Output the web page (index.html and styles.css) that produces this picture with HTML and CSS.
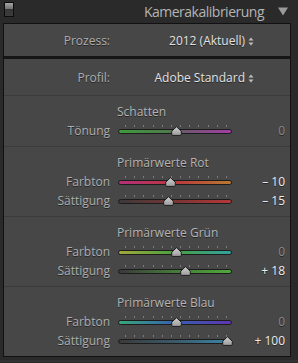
FILE: index.html
```html
<!DOCTYPE html>
<html lang="de">
<head>
<meta charset="utf-8">
<title>Kamerakalibrierung</title>
<link rel="stylesheet" href="styles.css">
</head>
<body>
<div class="header">
  <div class="toggle"></div>
  <div class="title">Kamerakalibrierung</div>
  <svg class="caret" width="10" height="9" viewBox="0 0 10 9"><path d="M0 0.5 H10 L5 8.5 Z" fill="#9a9a9a"/></svg>
</div>
<div class="panel">
  <div class="sec-proc">
    <div class="sel-row">
      <span class="label">Prozess:</span>
      <span class="sel">2012 (Aktuell)<svg class="spin" width="6" height="9" viewBox="0 0 6 9"><path d="M3 0.5 L5.5 3.5 H0.5 Z M3 8.5 L5.5 5.5 H0.5 Z" fill="#bdbdbd"/></svg></span>
    </div>
  </div>
  <div class="sec-profil">
    <div class="sel-row">
      <span class="label">Profil:</span>
      <span class="sel">Adobe Standard<svg class="spin" width="6" height="9" viewBox="0 0 6 9"><path d="M3 0.5 L5.5 3.5 H0.5 Z M3 8.5 L5.5 5.5 H0.5 Z" fill="#bdbdbd"/></svg></span>
    </div>
  </div>

  <div class="sec">
    <div class="sec-title">Schatten</div>
    <div class="row">
      <span class="label">Tönung</span>
      <div class="slider"><div class="ticks"><i></i><i></i><i></i><i></i><i></i><i></i><i></i><i></i><i></i><i></i><i></i><i></i></div><div class="track t-toenung"></div><svg class="thumb" style="left:52.5px" width="11" height="10" viewBox="0 0 11 10"><path d="M5.5 0.7 L10.3 5.2 V8.3 Q10.3 9.4 9.2 9.4 H1.8 Q0.7 9.4 0.7 8.3 V5.2 Z" fill="url(#tg)" stroke="#1e1e1e" stroke-width="1"/></svg></div>
      <span class="val zero">0</span>
    </div>
  </div>

  <div class="sec">
    <div class="sec-title">Primärwerte Rot</div>
    <div class="row">
      <span class="label">Farbton</span>
      <div class="slider"><div class="ticks"><i></i><i></i><i></i><i></i><i></i><i></i><i></i><i></i><i></i><i></i><i></i><i></i></div><div class="track t-rot-h"></div><svg class="thumb" style="left:47.3px" width="11" height="10" viewBox="0 0 11 10"><path d="M5.5 0.7 L10.3 5.2 V8.3 Q10.3 9.4 9.2 9.4 H1.8 Q0.7 9.4 0.7 8.3 V5.2 Z" fill="url(#tg)" stroke="#1e1e1e" stroke-width="1"/></svg></div>
      <span class="val">– 10</span>
    </div>
    <div class="row">
      <span class="label">Sättigung</span>
      <div class="slider"><div class="ticks"><i></i><i></i><i></i><i></i><i></i><i></i><i></i><i></i><i></i><i></i><i></i><i></i></div><div class="track t-rot-s"></div><svg class="thumb" style="left:44.7px" width="11" height="10" viewBox="0 0 11 10"><path d="M5.5 0.7 L10.3 5.2 V8.3 Q10.3 9.4 9.2 9.4 H1.8 Q0.7 9.4 0.7 8.3 V5.2 Z" fill="url(#tg)" stroke="#1e1e1e" stroke-width="1"/></svg></div>
      <span class="val">– 15</span>
    </div>
  </div>

  <div class="sec">
    <div class="sec-title">Primärwerte Grün</div>
    <div class="row">
      <span class="label">Farbton</span>
      <div class="slider"><div class="ticks"><i></i><i></i><i></i><i></i><i></i><i></i><i></i><i></i><i></i><i></i><i></i><i></i></div><div class="track t-gruen-h"></div><svg class="thumb" style="left:52.5px" width="11" height="10" viewBox="0 0 11 10"><path d="M5.5 0.7 L10.3 5.2 V8.3 Q10.3 9.4 9.2 9.4 H1.8 Q0.7 9.4 0.7 8.3 V5.2 Z" fill="url(#tg)" stroke="#1e1e1e" stroke-width="1"/></svg></div>
      <span class="val zero">0</span>
    </div>
    <div class="row">
      <span class="label">Sättigung</span>
      <div class="slider"><div class="ticks"><i></i><i></i><i></i><i></i><i></i><i></i><i></i><i></i><i></i><i></i><i></i><i></i></div><div class="track t-gruen-s"></div><svg class="thumb" style="left:61.8px" width="11" height="10" viewBox="0 0 11 10"><path d="M5.5 0.7 L10.3 5.2 V8.3 Q10.3 9.4 9.2 9.4 H1.8 Q0.7 9.4 0.7 8.3 V5.2 Z" fill="url(#tg)" stroke="#1e1e1e" stroke-width="1"/></svg></div>
      <span class="val">+ 18</span>
    </div>
  </div>

  <div class="sec last">
    <div class="sec-title">Primärwerte Blau</div>
    <div class="row">
      <span class="label">Farbton</span>
      <div class="slider"><div class="ticks"><i></i><i></i><i></i><i></i><i></i><i></i><i></i><i></i><i></i><i></i><i></i><i></i></div><div class="track t-blau-h"></div><svg class="thumb" style="left:52.5px" width="11" height="10" viewBox="0 0 11 10"><path d="M5.5 0.7 L10.3 5.2 V8.3 Q10.3 9.4 9.2 9.4 H1.8 Q0.7 9.4 0.7 8.3 V5.2 Z" fill="url(#tg)" stroke="#1e1e1e" stroke-width="1"/></svg></div>
      <span class="val zero">0</span>
    </div>
    <div class="row">
      <span class="label">Sättigung</span>
      <div class="slider"><div class="ticks"><i></i><i></i><i></i><i></i><i></i><i></i><i></i><i></i><i></i><i></i><i></i><i></i></div><div class="track t-blau-s"></div><svg class="thumb" style="left:104.2px" width="11" height="10" viewBox="0 0 11 10"><path d="M5.5 0.7 L10.3 5.2 V8.3 Q10.3 9.4 9.2 9.4 H1.8 Q0.7 9.4 0.7 8.3 V5.2 Z" fill="url(#tg)" stroke="#1e1e1e" stroke-width="1"/></svg></div>
      <span class="val">+ 100</span>
    </div>
  </div>
</div>
<div class="foot"></div>
<svg width="0" height="0" class="defs"><defs><linearGradient id="tg" x1="0" y1="0" x2="0" y2="1"><stop offset="0" stop-color="#d2d2d2"/><stop offset="1" stop-color="#9a9a9a"/></linearGradient></defs></svg>
</body>
</html>
```
FILE: styles.css
```css
html, body {
  margin: 0;
  padding: 0;
}
body {
  width: 298px;
  height: 363px;
  overflow: hidden;
  background: #2a2a2a;
  font-family: "Open Sans", "DejaVu Sans", sans-serif;
  font-size: 12px;
  color: #aaaaaa;
}
.defs {
  position: absolute;
}
.header {
  height: 23px;
  display: flex;
  align-items: center;
  padding: 0 10px 0 4px;
  box-sizing: border-box;
}
.toggle {
  align-self: flex-start;
  margin-top: 2px;
  width: 10px;
  height: 15px;
  box-sizing: border-box;
  border: 1px solid #0c0c0c;
  background: linear-gradient(#a4a4a4, #6c6c6c 50%, #363636 50%, #3c3c3c);
}
.title {
  margin-left: auto;
  margin-right: 14px;
  font-size: 14px;
  letter-spacing: -0.5px;
  color: #b4b4b4;
  line-height: 23px;
}
.caret {
  display: block;
}
.panel {
  margin-left: 3px;
  width: 288px;
  box-sizing: border-box;
  border: 1px solid #111111;
  background: #474747;
}
.sec-proc {
  height: 32px;
  display: flex;
  align-items: center;
  border-bottom: 3px solid #151515;
}
.sec-profil {
  height: 36px;
  display: flex;
  align-items: center;
  border-bottom: 1px solid #3b3b3b;
}
.sel-row {
  display: grid;
  grid-template-columns: 106px 136px;
  column-gap: 8px;
  align-items: center;
  width: 100%;
}
.label {
  text-align: right;
  color: #aeaeae;
  text-shadow: 0 1px 0 #262626;
  white-space: nowrap;
}
.sel {
  text-align: right;
  color: #e2e2e2;
  text-shadow: 0 1px 0 #262626;
  white-space: nowrap;
}
.spin {
  margin-left: 3px;
  vertical-align: -1px;
}
.sec {
  padding: 6px 0;
  border-bottom: 1px solid #3b3b3b;
}
.sec.last {
  border-bottom: none;
}
.sec-title {
  height: 19px;
  line-height: 19px;
  padding-left: 113px;
  color: #b4b4b4;
  text-shadow: 0 1px 0 #262626;
}
.row {
  display: grid;
  grid-template-columns: 106px 114px 45px;
  column-gap: 8px;
  height: 19px;
  line-height: 19px;
  align-items: center;
}
.slider {
  position: relative;
  height: 19px;
}
.ticks {
  position: absolute;
  left: 7px;
  right: 5px;
  top: 4px;
  height: 2px;
  display: flex;
  justify-content: space-between;
}
.ticks i {
  display: block;
  width: 1px;
  height: 2px;
  background: #7c7c7c;
}
.track {
  position: absolute;
  left: 0;
  right: 0;
  top: 8px;
  height: 5px;
  box-sizing: border-box;
  border: 1px solid #1c1c1c;
  border-radius: 3px;
}
.thumb {
  position: absolute;
  top: 5px;
  display: block;
}
.t-toenung { background: linear-gradient(90deg, #3f9a3c, #4f7a4c 45%, #6a5a6a 55%, #a23ca6); }
.t-rot-h { background: linear-gradient(90deg, #b3307a, #b8383e 50%, #b87a30); }
.t-rot-s { background: linear-gradient(90deg, #3a3a3a, #7a3434 50%, #b43838); }
.t-gruen-h { background: linear-gradient(90deg, #a2a83a, #48a040 50%, #32a0a0); }
.t-gruen-s { background: linear-gradient(90deg, #3a3a3a, #467a3a 50%, #4ea83a); }
.t-blau-h { background: linear-gradient(90deg, #38a878, #3860b0 50%, #5e34b0); }
.t-blau-s { background: linear-gradient(90deg, #3a3a3a, #3a5a6a 50%, #3a86a8); }
.val {
  text-align: right;
  color: #ececec;
  text-shadow: 0 1px 0 #262626;
  white-space: nowrap;
}
.val.zero {
  color: #8a8a8a;
}
.foot {
  height: 2px;
  margin-top: 3px;
  background: #333333;
}
```
